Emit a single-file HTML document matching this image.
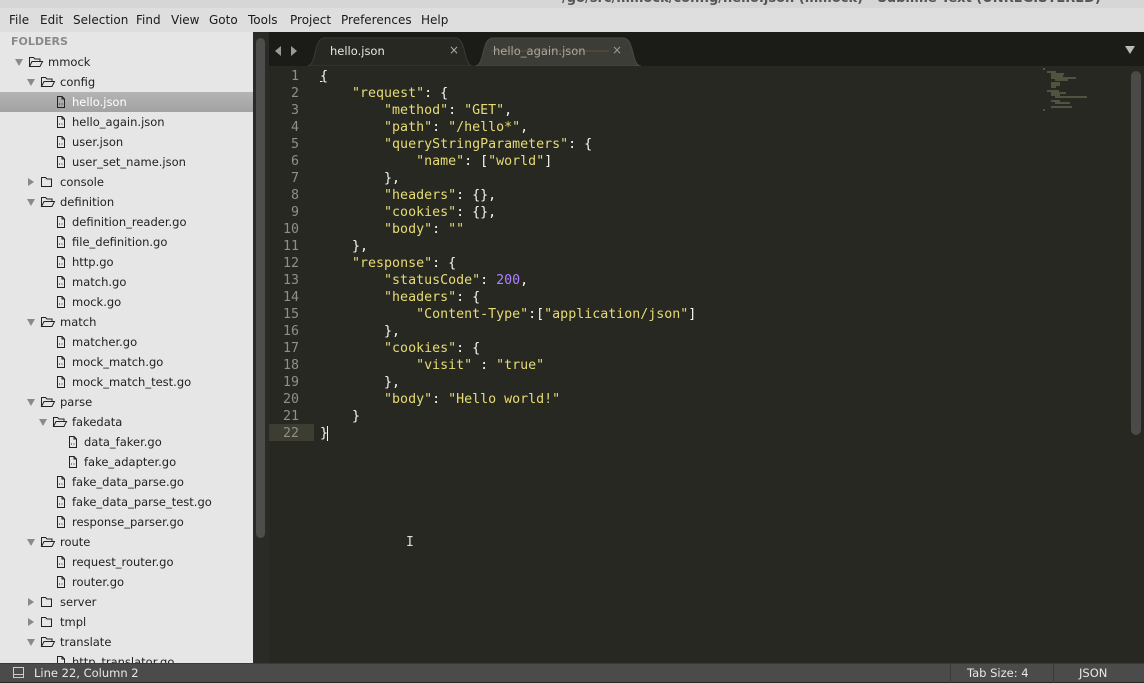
<!DOCTYPE html>
<html><head><meta charset="utf-8"><style>
*{margin:0;padding:0;box-sizing:border-box}
body{width:1144px;height:682px;overflow:hidden;background:#272822;position:relative;font-family:"DejaVu Sans","Liberation Sans",sans-serif}
#title{position:absolute;left:0;top:0;width:1144px;height:8px;background:#d6d6d6;overflow:hidden}
#title span{position:absolute;left:562px;top:-9px;font-size:13px;font-weight:bold;color:#555}
#menu{position:absolute;left:0;top:8px;width:1144px;height:24px;background:#dedede;font-size:12px;color:#1a1a1a}
#menu span{position:absolute;top:5px}
#side{position:absolute;left:0;top:32px;width:253px;height:631px;background:#e6e6e6;overflow:hidden;font-size:11.5px;color:#222}
#side .r{position:absolute;left:0;width:253px;height:20px;line-height:20px;white-space:nowrap}
#side .r svg{position:absolute}
#side .t{position:absolute}
#sb{position:absolute;left:253px;top:32px;width:16px;height:631px;background:#2a2a27}
#sbt{position:absolute;left:256px;top:38px;width:9px;height:500px;background:#4d4d4b;border-radius:5px}
#tabs{position:absolute;left:269px;top:32px;width:875px;height:34px;background:#1b1c18}
#code{position:absolute;left:269px;top:67px;width:875px;height:596px;background:#272822;font-family:"DejaVu Sans Mono","Liberation Mono",monospace;font-size:13.3px}
.ln{position:absolute;left:0;width:30px;text-align:right;color:#8f908a;height:17px;line-height:17px}
.cl{position:absolute;left:51px;white-space:pre;color:#f8f8f2;height:17px;line-height:17px}
.s{color:#e6db74}.n{color:#ae81ff}
#status{position:absolute;left:0;top:663px;width:1144px;height:19px;background:#4b4b4b;border-top:1px solid #3a3a3a;font-size:11.5px;color:#e8e8e8}
</style></head><body>
<div id="title"><span>/go/src/mmock/config/hello.json (mmock) - Sublime Text (UNREGISTERED)</span></div>
<div id="menu">
<span style="left:9px">File</span><span style="left:40px">Edit</span><span style="left:73px">Selection</span><span style="left:136px">Find</span><span style="left:171px">View</span><span style="left:209px">Goto</span><span style="left:248px">Tools</span><span style="left:290px">Project</span><span style="left:341px">Preferences</span><span style="left:421px">Help</span>
</div>
<div id="side">
<div class="r" style="top:0;font-weight:bold;color:#8a8a8a;font-size:11px"><span class="t" style="left:11px">FOLDERS</span></div>
<div id="rows"></div>
</div>
<div id="sb"></div><div id="sbt"></div>
<div id="tabs">
<svg width="875" height="34" style="position:absolute;left:0;top:0">
<polygon points="6,19 12,14 12,24" fill="#9a9a9a"/><polygon points="22,14 28,19 22,24" fill="#9a9a9a"/>
<path d="M206,34 C216,34 212,6 224,6 L354,6 C366,6 362,34 372,34 Z" fill="#3c3d37" stroke="#4a4a44"/>
<line x1="222" y1="19" x2="340" y2="19" stroke="#6a5038" stroke-width="1"/>
<path d="M38,34 C48,34 44,6 56,6 L186,6 C198,6 194,34 204,34 Z" fill="#272822" stroke="#3a3a35"/>
<polygon points="856,14 866,14 861,22" fill="#bbb"/>
</svg>
<span style="position:absolute;left:61px;top:12px;font-size:11.5px;color:#e8e8e8">hello.json</span>
<span style="position:absolute;left:180px;top:11px;font-size:12px;color:#aaa">×</span>
<span style="position:absolute;left:224px;top:12px;font-size:11.5px;color:#a8a8a2">hello_again.json</span>
<span style="position:absolute;left:343px;top:11px;font-size:12px;color:#999">×</span>
</div>
<div id="code"></div>
<div style="position:absolute;left:1131px;top:71px;width:10px;height:364px;background:#4a4a48;border-radius:5px"></div>
<div style="position:absolute;left:1042px;top:68px;width:50px;height:44px;opacity:.6">
<svg width="50" height="44"><g stroke="#b8b48a" stroke-width="1">
<line x1="1" y1="1" x2="3" y2="1"/><line x1="5" y1="4" x2="14" y2="4"/><line x1="9" y1="6" x2="22" y2="6"/><line x1="9" y1="8" x2="21" y2="8"/><line x1="9" y1="10" x2="34" y2="10"/><line x1="13" y1="12" x2="26" y2="12"/><line x1="9" y1="15" x2="18" y2="15"/><line x1="9" y1="17" x2="18" y2="17"/><line x1="9" y1="19" x2="14" y2="19"/><line x1="5" y1="23" x2="17" y2="23"/><line x1="9" y1="25" x2="24" y2="25"/><line x1="9" y1="27" x2="18" y2="27"/><line x1="13" y1="29" x2="45" y2="29"/><line x1="9" y1="33" x2="18" y2="33"/><line x1="13" y1="35" x2="28" y2="35"/><line x1="9" y1="39" x2="30" y2="39"/><line x1="1" y1="42" x2="3" y2="42"/></g></svg></div>
<div style="position:absolute;left:406px;top:535px;color:#ddd;font-size:13px;font-family:'DejaVu Sans Mono',monospace">I</div>
<div id="status">
<svg width="12" height="12" style="position:absolute;left:13px;top:3px"><rect x="0.5" y="0.5" width="10" height="10" fill="none" stroke="#ccc"/><line x1="1" y1="7.5" x2="10" y2="7.5" stroke="#ccc"/></svg>
<span style="position:absolute;left:34px;top:2px">Line 22, Column 2</span>
<div style="position:absolute;left:950px;top:0;width:1px;height:19px;background:#3a3a3a"></div>
<span style="position:absolute;left:967px;top:2px">Tab Size: 4</span>
<div style="position:absolute;left:1053px;top:0;width:1px;height:19px;background:#3a3a3a"></div>
<span style="position:absolute;left:1079px;top:2px">JSON</span>
</div>
<script>
var rows=[["mmock",0,"o"],["config",1,"o"],["hello.json",2,"f",1],["hello_again.json",2,"f"],["user.json",2,"f"],["user_set_name.json",2,"f"],["console",1,"c"],["definition",1,"o"],["definition_reader.go",2,"f"],["file_definition.go",2,"f"],["http.go",2,"f"],["match.go",2,"f"],["mock.go",2,"f"],["match",1,"o"],["matcher.go",2,"f"],["mock_match.go",2,"f"],["mock_match_test.go",2,"f"],["parse",1,"o"],["fakedata",2,"o"],["data_faker.go",3,"f"],["fake_adapter.go",3,"f"],["fake_data_parse.go",2,"f"],["fake_data_parse_test.go",2,"f"],["response_parser.go",2,"f"],["route",1,"o"],["request_router.go",2,"f"],["router.go",2,"f"],["server",1,"c"],["tmpl",1,"c"],["translate",1,"o"],["http_translator.go",2,"f"]];
var h="";
rows.forEach(function(r,i){
 var top=20+i*20,l=r[1],st="top:"+top+"px;";
 if(r[3])st+="background:linear-gradient(#b4b4b4,#a2a2a2);color:#fff;";
 h+='<div class="r" style="'+st+'">';
 if(r[2]=="f"){
  var x=(l==3?68:56);
  h+='<svg width="10" height="12" style="left:'+x+'px;top:4px"><path d="M1.5,0.5 H6 L8.5,3 V11.5 H1.5 Z M6,0.5 V3 H8.5" fill="none" stroke="#222"/><path d="M3,8 h1 M5.5,8 h1" stroke="#222"/></svg>';
  h+='<span class="t" style="left:'+(x+16)+'px">'+r[0]+'</span>';
 }else{
  var ax=14+l*12,fx=28+l*12;
  if(r[2]=="o")h+='<svg width="10" height="10" style="left:'+ax+'px;top:6px"><polygon points="1,1 9,1 5,8" fill="#8a8a8a"/></svg>';
  else h+='<svg width="10" height="10" style="left:'+ax+'px;top:5px"><polygon points="2,1 8,5 2,9" fill="#8a8a8a"/></svg>';
  if(r[2]=="o")h+='<svg width="16" height="12" style="left:'+fx+'px;top:4px"><path d="M1.5,10.5 V1.5 H5.5 L7,3 H12 V5 M1.5,10.5 L4,5.5 H14.5 L12,10.5 Z" fill="none" stroke="#222"/></svg>';
  else h+='<svg width="16" height="12" style="left:'+fx+'px;top:4px"><path d="M1.5,10.5 V1.5 H5.5 L7,3 H11.5 V10.5 Z" fill="none" stroke="#222"/></svg>';
  h+='<span class="t" style="left:'+(fx+20)+'px">'+r[0]+'</span>';
 }
 h+='</div>';
});
document.getElementById("rows").innerHTML=h;
var S=function(t){return '<span class="s">'+t+'</span>'};
var code=[
'{',
'    '+S('"request"')+': {',
'        '+S('"method"')+': '+S('"GET"')+',',
'        '+S('"path"')+': '+S('"/hello*"')+',',
'        '+S('"queryStringParameters"')+': {',
'            '+S('"name"')+': ['+S('"world"')+']',
'        },',
'        '+S('"headers"')+': {},',
'        '+S('"cookies"')+': {},',
'        '+S('"body"')+': '+S('""'),
'    },',
'    '+S('"response"')+': {',
'        '+S('"statusCode"')+': <span class="n">200</span>,',
'        '+S('"headers"')+': {',
'            '+S('"Content-Type"')+':['+S('"application/json"')+']',
'        },',
'        '+S('"cookies"')+': {',
'            '+S('"visit"')+' : '+S('"true"'),
'        },',
'        '+S('"body"')+': '+S('"Hello world!"'),
'    }',
'}'];
var c='<div style="position:absolute;left:0;top:357px;width:45px;height:17px;background:#3e3d32"></div>';
code.forEach(function(l,i){
 var t=1+i*17;
 c+='<div class="ln" style="top:'+t+'px">'+(i+1)+'</div>';
 if(i==0)l='<u>{</u>';
 if(i==21)l='}<span style="border-left:1px solid #f8f8f2;margin-left:-1px"></span>';
 c+='<div class="cl" style="top:'+t+'px">'+l+'</div>';
});
document.getElementById("code").innerHTML=c;
</script>
</body></html>
